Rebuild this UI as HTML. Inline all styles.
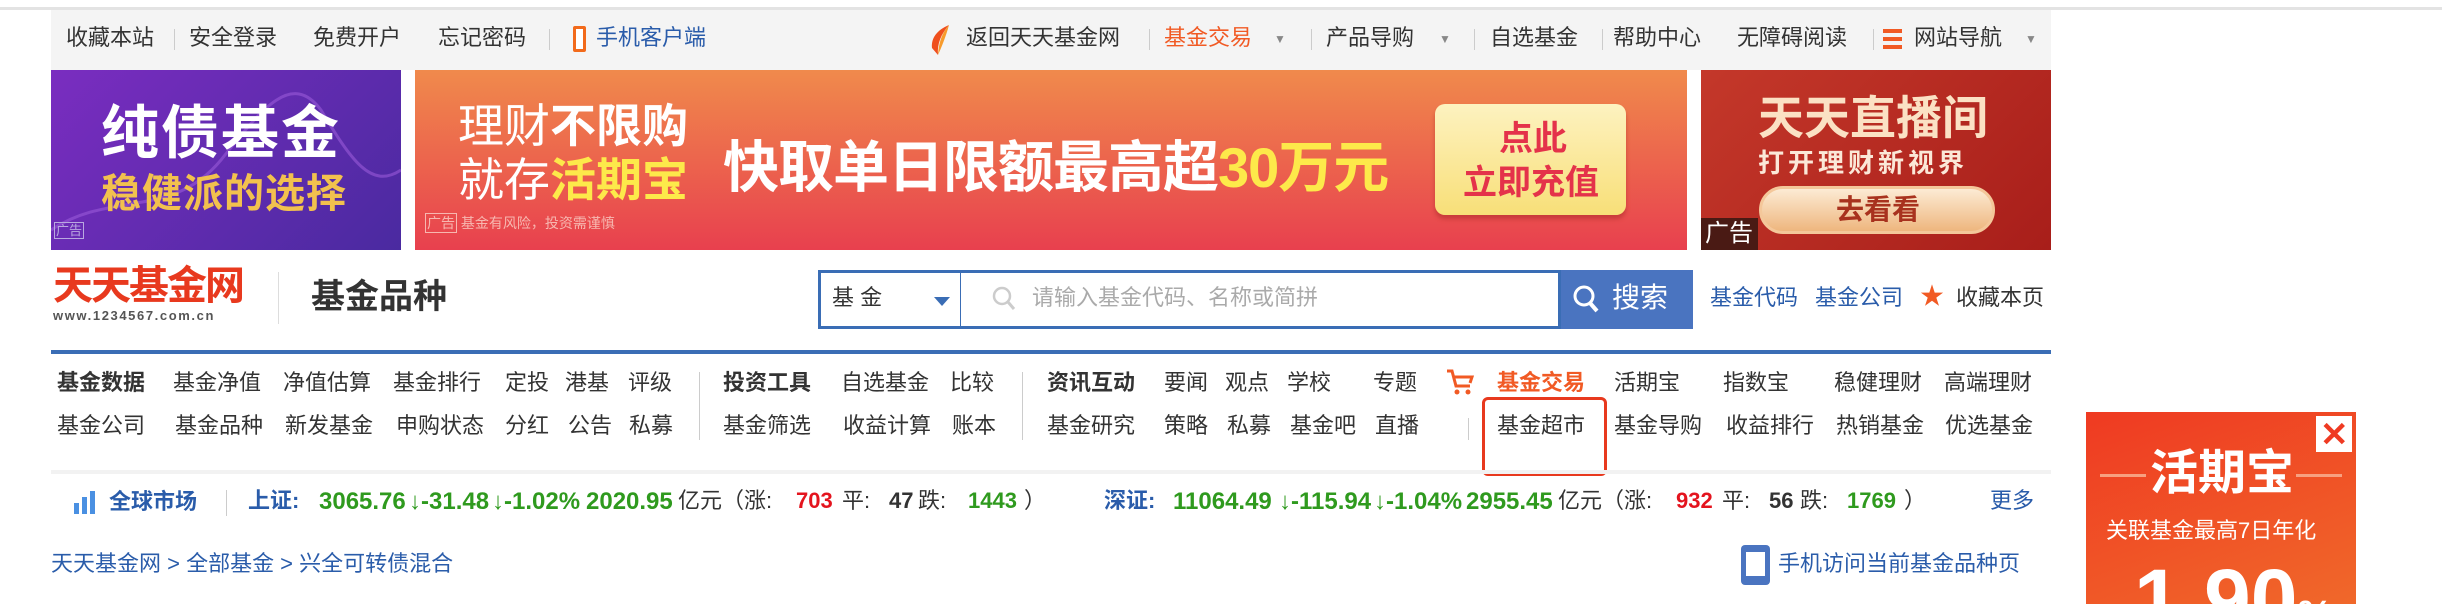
<!DOCTYPE html>
<html><head><meta charset="utf-8">
<style>
*{margin:0;padding:0;box-sizing:border-box}
html,body{width:2442px;height:604px;overflow:hidden}
body{background:#fff;position:relative;font-family:"Liberation Sans","Noto Sans CJK SC",sans-serif;color:#333}
.a{position:absolute;white-space:nowrap;line-height:1}
.t{font-size:22px;top:27px;color:#333}
.sep{position:absolute;width:1px;background:#ccc}
.n{font-size:22px;color:#333}
.b{font-weight:bold}
.blue{color:#2a5caa}
.g{color:#2f9a1e}
.r{color:#e4141e}
.arr{font-size:12px;color:#888}
.num{font-size:24px;font-weight:bold;color:#2f9a1e}
</style></head><body>
<div class="a" style="left:0;top:7px;width:2442px;height:3px;background:#e3e3e3"></div>
<div class="a" style="left:51px;top:10px;width:2000px;height:60px;background:#f4f4f4"></div>
<span class="a t" style="left:66px">收藏本站</span>
<div class="sep" style="left:174px;top:29px;height:21px"></div>
<span class="a t" style="left:189px">安全登录</span>
<span class="a t" style="left:313px">免费开户</span>
<span class="a t" style="left:438px">忘记密码</span>
<div class="sep" style="left:549px;top:29px;height:21px"></div>
<div class="a" style="left:573px;top:26px;width:13px;height:26px;border:3px solid #f26a1b;border-radius:2px;background:#fff"></div>
<span class="a t" style="left:596px;color:#2a5caa">手机客户端</span>
<svg class="a" style="left:929px;top:24px" width="22" height="32" viewBox="0 0 22 32"><path d="M20 1 C8 6 2 14 3 24 L9 31 C8 20 12 10 20 1Z" fill="#ef4f1d"/><path d="M20 1 C14 8 10 16 9 31 C13 22 17 12 20 1Z" fill="#f79b2c"/></svg>
<span class="a t" style="left:966px">返回天天基金网</span>
<div class="sep" style="left:1149px;top:29px;height:21px"></div>
<span class="a t" style="left:1164px;color:#f15a24">基金交易</span><span class="a arr" style="left:1274px;top:33px">▼</span>
<div class="sep" style="left:1311px;top:29px;height:21px"></div>
<span class="a t" style="left:1326px">产品导购</span><span class="a arr" style="left:1439px;top:33px">▼</span>
<div class="sep" style="left:1474px;top:29px;height:21px"></div>
<span class="a t" style="left:1490px">自选基金</span>
<div class="sep" style="left:1602px;top:29px;height:21px"></div>
<span class="a t" style="left:1613px">帮助中心</span>
<span class="a t" style="left:1737px">无障碍阅读</span>
<div class="sep" style="left:1873px;top:29px;height:21px"></div>
<div class="a" style="left:1883px;top:29px;width:19px;height:4px;background:#f15a24;box-shadow:0 8px 0 #f15a24,0 16px 0 #f15a24"></div>
<span class="a t" style="left:1914px">网站导航</span><span class="a arr" style="left:2025px;top:33px">▼</span>

<!-- ad1 -->
<div class="a" style="left:51px;top:70px;width:350px;height:180px;background:linear-gradient(135deg,#7a2dc0,#4a2aa0);overflow:hidden">
 <svg class="a" style="left:0;top:0" width="350" height="180"><path d="M0 160 C60 120 120 150 170 90 C210 40 240 0 270 40 C300 90 320 120 350 100" stroke="#9a5ad8" stroke-width="3" fill="none" opacity=".6"/></svg>
 <span class="a" style="left:50px;top:35px;font-size:58px;font-weight:bold;color:#fff;letter-spacing:2px">纯债基金</span>
 <span class="a" style="left:50px;top:104px;font-size:40px;font-weight:bold;color:#f2c14e;letter-spacing:1px">稳健派的选择</span>
 <span class="a" style="left:3px;top:152px;font-size:13px;color:#b9a8e0;border:1px solid #b9a8e0;padding:1px">广告</span>
</div>
<!-- ad2 -->
<div class="a" style="left:415px;top:70px;width:1272px;height:180px;background:linear-gradient(180deg,#f08a4c,#e8404e);overflow:hidden">
 <span class="a" style="left:43px;top:33px;font-size:46px;color:#fff"><span style="font-weight:normal">理财</span><b>不限购</b></span>
 <span class="a" style="left:43px;top:87px;font-size:46px;color:#fff">就存<b style="color:#fde94a">活期宝</b></span>
 <span class="a" style="left:308px;top:70px;font-size:56px;font-weight:bold;color:#fff;letter-spacing:-1px">快取单日限额最高超<span style="color:#fde94a">30万元</span></span>
 <div class="a" style="left:1020px;top:34px;width:191px;height:111px;border-radius:10px;background:linear-gradient(#fdf2c0,#f8df78);box-shadow:0 4px 4px rgba(150,30,30,.4)"></div>
 <span class="a" style="left:1084px;top:52px;font-size:34px;font-weight:bold;color:#e4324a">点此</span>
 <span class="a" style="left:1048px;top:96px;font-size:34px;font-weight:bold;color:#e4324a">立即充值</span>
 <span class="a" style="left:10px;top:146px;font-size:14px;color:#f7b7b0"><span style="border:1px solid #f7b7b0;padding:1px">广告</span> 基金有风险，投资需谨慎</span>
</div>
<!-- ad3 -->
<div class="a" style="left:1701px;top:70px;width:350px;height:180px;background:linear-gradient(135deg,#c4382a,#a81e1a);overflow:hidden">
 <span class="a" style="left:57px;top:25px;font-size:46px;font-weight:bold;color:#fbe1c4">天天直播间</span>
 <span class="a" style="left:57px;top:80px;font-size:26px;font-weight:bold;color:#fbe8d8;letter-spacing:4px">打开理财新视界</span>
 <div class="a" style="left:58px;top:116px;width:236px;height:48px;border-radius:24px;background:linear-gradient(#fcebd4,#eeb67e);border:3px solid #f4c79a"></div>
 <span class="a" style="left:135px;top:126px;font-size:28px;font-weight:bold;color:#a8321e">去看看</span>
 <div class="a" style="left:0;top:148px;width:57px;height:32px;background:#4a1a14"></div>
 <span class="a" style="left:4px;top:152px;font-size:24px;color:#fff">广告</span>
</div>

<!-- logo row -->
<span class="a" style="left:53px;top:266px;font-size:40px;font-weight:bold;color:#e8391e;letter-spacing:-2px">天天基金网</span>
<span class="a" style="left:53px;top:309px;font-size:13px;font-weight:bold;color:#555;letter-spacing:1.6px">www.1234567.com.cn</span>
<div class="sep" style="left:278px;top:272px;height:52px;background:#ddd"></div>
<span class="a" style="left:311px;top:280px;font-size:34px;font-weight:bold;color:#333">基金品种</span>
<div class="a" style="left:818px;top:270px;width:743px;height:59px;border:3px solid #3a6db5;background:#fff"></div>
<div class="sep" style="left:960px;top:272px;height:55px;background:#3a6db5"></div>
<span class="a" style="left:832px;top:287px;font-size:22px;color:#333">基 金</span>
<div class="a" style="left:934px;top:297px;width:0;height:0;border-left:8px solid transparent;border-right:8px solid transparent;border-top:9px solid #3a6db5"></div>
<svg class="a" style="left:992px;top:286px" width="24" height="26"><circle cx="10" cy="10" r="8" stroke="#ccc" stroke-width="2.5" fill="none"/><path d="M16 16 L22 23" stroke="#ccc" stroke-width="3"/></svg>
<span class="a" style="left:1032px;top:287px;font-size:22px;color:#aaa">请输入基金代码、名称或简拼</span>
<div class="a" style="left:1561px;top:270px;width:132px;height:59px;background:#4a74c0"></div>
<svg class="a" style="left:1572px;top:284px" width="28" height="30"><circle cx="12" cy="12" r="9" stroke="#fff" stroke-width="3" fill="none"/><path d="M18 19 L25 27" stroke="#fff" stroke-width="4"/></svg>
<span class="a" style="left:1612px;top:284px;font-size:28px;color:#fff">搜索</span>
<span class="a blue" style="left:1710px;top:287px;font-size:22px">基金代码</span>
<span class="a blue" style="left:1815px;top:287px;font-size:22px">基金公司</span>
<span class="a" style="left:1920px;top:285px;font-size:24px;color:#f15a24">★</span>
<span class="a" style="left:1956px;top:287px;font-size:22px;color:#333">收藏本页</span>

<div class="a" style="left:51px;top:350px;width:2000px;height:4px;background:#3a6db5"></div>

<!-- nav -->
<div class="a n" style="top:372px;left:0">
<span class="a b" style="left:57px">基金数据</span><span class="a" style="left:173px">基金净值</span><span class="a" style="left:283px">净值估算</span><span class="a" style="left:393px">基金排行</span><span class="a" style="left:505px">定投</span><span class="a" style="left:565px">港基</span><span class="a" style="left:628px">评级</span>
<span class="a b" style="left:723px">投资工具</span><span class="a" style="left:841px">自选基金</span><span class="a" style="left:950px">比较</span>
<span class="a b" style="left:1047px">资讯互动</span><span class="a" style="left:1164px">要闻</span><span class="a" style="left:1225px">观点</span><span class="a" style="left:1287px">学校</span><span class="a" style="left:1373px">专题</span>
<span class="a b" style="left:1497px;color:#f15a24">基金交易</span><span class="a" style="left:1614px">活期宝</span><span class="a" style="left:1723px">指数宝</span><span class="a" style="left:1834px">稳健理财</span><span class="a" style="left:1944px">高端理财</span>
</div>
<svg class="a" style="left:1445px;top:368px" width="30" height="28"><path d="M2 3 L7 3 L11 18 L25 18 M9 9 L27 9 L25 15" stroke="#f15a24" stroke-width="3" fill="none"/><circle cx="12" cy="24" r="2.5" fill="#f15a24"/><circle cx="23" cy="24" r="2.5" fill="#f15a24"/></svg>
<div class="a n" style="top:415px;left:0">
<span class="a" style="left:57px">基金公司</span><span class="a" style="left:175px">基金品种</span><span class="a" style="left:285px">新发基金</span><span class="a" style="left:396px">申购状态</span><span class="a" style="left:505px">分红</span><span class="a" style="left:568px">公告</span><span class="a" style="left:629px">私募</span>
<span class="a" style="left:723px">基金筛选</span><span class="a" style="left:843px">收益计算</span><span class="a" style="left:952px">账本</span>
<span class="a" style="left:1047px">基金研究</span><span class="a" style="left:1164px">策略</span><span class="a" style="left:1227px">私募</span><span class="a" style="left:1290px">基金吧</span><span class="a" style="left:1375px">直播</span>
<span class="a" style="left:1497px">基金超市</span><span class="a" style="left:1614px">基金导购</span><span class="a" style="left:1726px">收益排行</span><span class="a" style="left:1836px">热销基金</span><span class="a" style="left:1945px">优选基金</span>
</div>
<div class="sep" style="left:699px;top:372px;height:68px"></div>
<div class="sep" style="left:1022px;top:372px;height:68px"></div>
<div class="sep" style="left:1468px;top:418px;height:22px"></div>
<div class="a" style="left:1482px;top:397px;width:125px;height:79px;border:3px solid #e8391e;border-radius:6px"></div>
<div class="a" style="left:51px;top:470px;width:2000px;height:4px;background:#f2f2f2"></div>

<!-- market -->
<svg class="a" style="left:73px;top:489px" width="24" height="26"><rect x="1" y="14" width="5" height="11" fill="#4a90e2"/><rect x="9" y="8" width="5" height="17" fill="#4a90e2"/><rect x="17" y="2" width="5" height="23" fill="#4a90e2"/></svg>
<span class="a b blue" style="left:109px;top:491px;font-size:22px">全球市场</span>
<div class="sep" style="left:226px;top:490px;height:26px"></div>
<div class="a" style="top:490px;left:0;font-size:22px">
<span class="a b blue" style="left:248px">上证:</span>
<span class="a num" style="left:319px">3065.76</span><span class="a num" style="left:409px">↓-31.48</span><span class="a num" style="left:492px">↓-1.02%</span><span class="a num" style="left:586px">2020.95</span>
<span class="a" style="left:678px">亿元（涨:</span><span class="a r b" style="left:796px">703</span><span class="a" style="left:842px">平:</span><span class="a b" style="left:889px">47</span><span class="a" style="left:918px">跌:</span><span class="a g b" style="left:968px">1443</span><span class="a" style="left:1024px">）</span>
<span class="a b blue" style="left:1104px">深证:</span>
<span class="a num" style="left:1173px">11064.49</span><span class="a num" style="left:1279px">↓-115.94</span><span class="a num" style="left:1374px">↓-1.04%</span><span class="a num" style="left:1466px">2955.45</span>
<span class="a" style="left:1558px">亿元（涨:</span><span class="a r b" style="left:1676px">932</span><span class="a" style="left:1722px">平:</span><span class="a b" style="left:1769px">56</span><span class="a" style="left:1800px">跌:</span><span class="a g b" style="left:1847px">1769</span><span class="a" style="left:1904px">）</span>
<span class="a blue" style="left:1990px">更多</span>
</div>

<span class="a blue" style="left:51px;top:553px;font-size:22px">天天基金网 &gt; 全部基金 &gt; 兴全可转债混合</span>
<div class="a" style="left:1741px;top:545px;width:29px;height:40px;background:#4a74c0;border-radius:4px"></div>
<div class="a" style="left:1746px;top:552px;width:19px;height:24px;background:#fff"></div>
<span class="a blue" style="left:1778px;top:553px;font-size:22px">手机访问当前基金品种页</span>

<!-- right ad -->
<div class="a" style="left:2086px;top:412px;width:270px;height:192px;background:linear-gradient(160deg,#ef3a22,#f0682a);overflow:hidden">
 <div class="a" style="left:230px;top:4px;width:36px;height:36px;background:#fff"></div>
 <span class="a" style="left:234px;top:6px;font-size:34px;font-weight:bold;color:#ef3a22">✕</span>
 <div class="a" style="left:14px;top:62px;width:46px;height:3px;background:#f7a080"></div>
 <div class="a" style="left:210px;top:62px;width:46px;height:3px;background:#f7a080"></div>
 <span class="a" style="left:64px;top:38px;font-size:48px;font-weight:bold;color:#fff">活期宝</span>
 <span class="a" style="left:20px;top:108px;font-size:22px;color:#fff">关联基金最高7日年化</span>
 <span class="a" style="left:48px;top:145px;font-size:84px;font-weight:bold;color:#fff">1.90<span style="font-size:40px">%</span></span>
</div>
</body></html>
